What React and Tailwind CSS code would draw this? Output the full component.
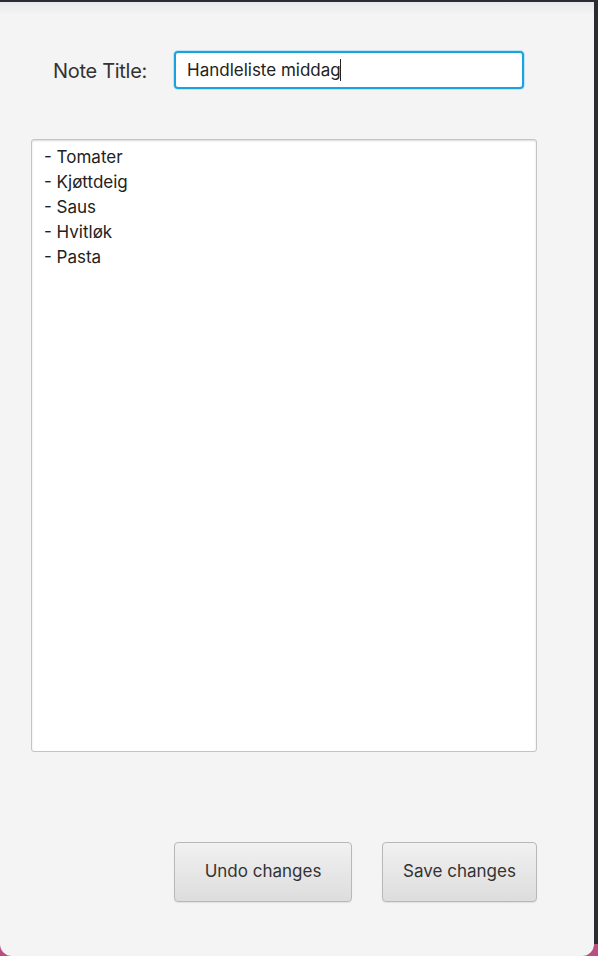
import { useState } from 'react'

export default function App(){
  const [title, setTitle] = useState('Handleliste middag')
  const [body, setBody] = useState('- Tomater\n- Kjøttdeig\n- Saus\n- Hvitløk\n- Pasta')

  const font = { fontFamily: 'Inter, "Noto Sans", sans-serif' }

  return (
    <div className="w-[598px] h-[956px] pt-[2px] pr-[4px] bg-[linear-gradient(to_bottom,#2b2b33_0px,#2b2b33_944px,#b94f7e_944px)]">
      <div className="relative h-[954px] rounded-b-[12px] bg-[#f4f4f4] flex flex-col text-[#333333]" style={font}>
        <div className="h-[12px] bg-[linear-gradient(to_bottom,#e9e9ea,#f4f4f4)]"></div>
        <div className="flex items-center pl-[53px] mt-[38px]">
          <label className="text-[20px] w-[121px] tracking-[-0.3px]">Note Title:</label>
          <div className="relative -mt-[1px]">
            <input
              value={title}
              onChange={e=>setTitle(e.target.value)}
              className="w-[350px] h-[38px] rounded-[4px] border-2 border-[#1aa3dc] bg-white px-[11px] text-[17px] text-[#222] outline-none shadow-[0_0_0_1px_#bfe3f4]"
              style={font}
            />
            <span className="absolute left-[166px] top-[8px] w-[1px] h-[22px] bg-[#222]"></span>
          </div>
        </div>

        <div className="mt-[50px] ml-[31px] w-[506px] h-[613px] rounded-[3px] border border-[#c4c4c4] bg-white shadow-[inset_0_1px_2px_rgba(0,0,0,0.15)]">
          <textarea
            value={body}
            onChange={e=>setBody(e.target.value)}
            className="w-full h-full resize-none bg-transparent outline-none px-[12px] pt-[5px] text-[17px] leading-[25px] text-[#222]"
            style={font}
          />
        </div>

        <div className="flex justify-end gap-[30px] mt-[90px] mr-[57px]">
          <button className="w-[178px] h-[60px] rounded-[4px] border border-[#b8b8b8] bg-[linear-gradient(to_bottom,#f1f1f1,#dddddd)] text-[17px] text-[#333] shadow-[0_1px_1px_rgba(0,0,0,0.08)]" style={font}>Undo changes</button>
          <button className="w-[155px] h-[60px] rounded-[4px] border border-[#b8b8b8] bg-[linear-gradient(to_bottom,#f1f1f1,#dddddd)] text-[17px] text-[#333] shadow-[0_1px_1px_rgba(0,0,0,0.08)]" style={font}>Save changes</button>
        </div>
      </div>
    </div>
  )
}
